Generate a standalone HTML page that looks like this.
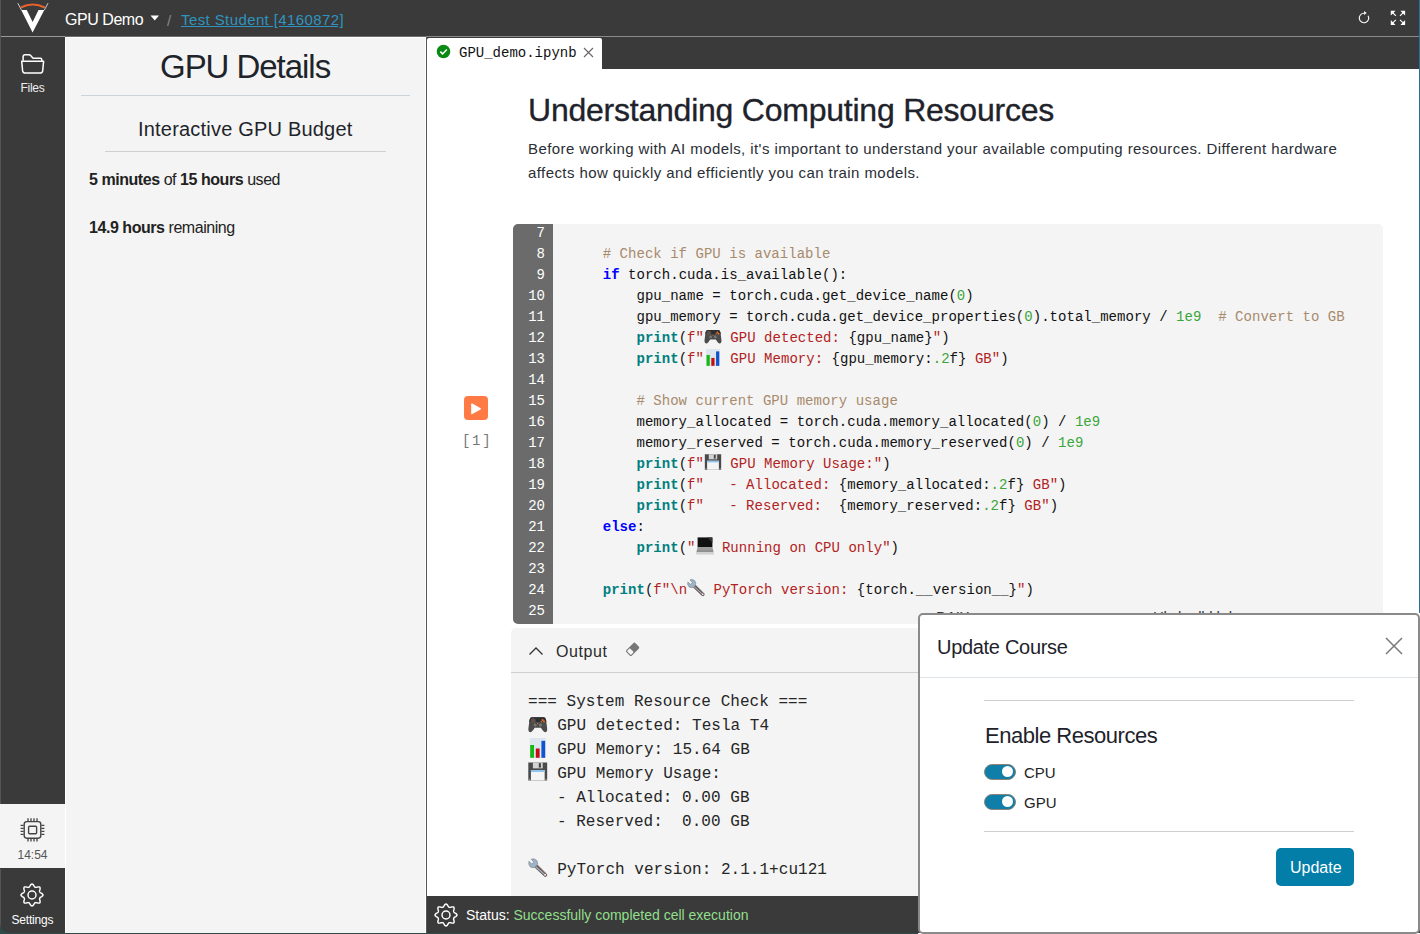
<!DOCTYPE html>
<html><head><meta charset="utf-8">
<style>
*{margin:0;padding:0;box-sizing:border-box}
html,body{width:1420px;height:934px;overflow:hidden;background:#3a3a3a;font-family:"Liberation Sans",sans-serif}
.abs{position:absolute}
.emo{display:inline-block;height:1px;position:relative;vertical-align:baseline}
.emo svg{position:absolute;left:0}
.mono{font-family:"Liberation Mono",monospace}
#top{left:0;top:0;width:1420px;height:36px;background:#3a3a3a}
#topline{left:0;top:36px;width:1420px;height:1px;background:linear-gradient(to right,#999 0,#999 65px,#6e6e6e 65px,#6e6e6e 426px,#8a8a8a 426px)}
#side{left:0;top:37px;width:65px;height:897px;background:#3a3a3a}
#panel{left:65px;top:37px;width:361px;height:897px;background:#f4f4f4;border-left:1px solid #fff;border-right:1px solid #fff;border-top:1px solid #fff}
#divider{left:426px;top:37px;width:1px;height:897px;background:#555}
#nb{left:427px;top:69px;width:993px;height:865px;background:#fff}
#tabbar{left:427px;top:37px;width:993px;height:32px;background:#3a3a3a}
#tab{left:427px;top:38px;width:175px;height:31px;background:#fff;border-top-left-radius:2px;border-top-right-radius:2px}
.t{position:absolute;white-space:pre;line-height:1}
</style></head>
<body>
<svg width="0" height="0" style="position:absolute">
<defs>
<symbol id="s-pad" viewBox="0 0 20 17">
  <path d="M4.2 1.2 Q2.2 1.2 1.6 3.6 L0.4 12.6 Q0.1 16.4 2.6 16.4 Q3.9 16.4 5.3 14.2 L6.8 11.9 H13.2 L14.7 14.2 Q16.1 16.4 17.4 16.4 Q19.9 16.4 19.6 12.6 L18.4 3.6 Q17.8 1.2 15.8 1.2 Z" fill="#4b4b4b"/>
  <path d="M4.2 1.2 Q2.2 1.2 1.6 3.6 L1.3 6 H18.7 L18.4 3.6 Q17.8 1.2 15.8 1.2 Z" fill="#2e2e2e"/>
  <circle cx="5.3" cy="4.8" r="2.4" fill="#555" stroke="#6a4a3a" stroke-width="0.6"/>
  <circle cx="14.9" cy="3.9" r="1.1" fill="#f26a1b"/>
  <circle cx="16.3" cy="5.3" r="1.1" fill="#f26a1b"/>
  <circle cx="13.6" cy="5.5" r="0.9" fill="#777"/>
  <circle cx="7.3" cy="9" r="1.6" fill="#777"/>
  <circle cx="12.7" cy="9" r="1.6" fill="#777"/>
  <circle cx="10" cy="7.5" r="0.8" fill="#d35a1a"/>
</symbol>
<symbol id="s-chart" viewBox="0 0 16 20">
  <rect x="0" y="0" width="16" height="20" fill="#dde6ef"/>
  <rect x="0.4" y="7" width="3.8" height="12.8" fill="#14b814"/>
  <rect x="6" y="10.5" width="3.8" height="9.3" fill="#c40f12"/>
  <rect x="11.6" y="2.8" width="3.8" height="17" fill="#1153cf"/>
</symbol>
<symbol id="s-disk" viewBox="0 0 20 19">
  <path d="M0.3 0.3 H19.7 V18.7 H0.3 Z" fill="#4a4a4a"/>
  <rect x="5" y="0.3" width="10" height="6" fill="#d3d3d3"/>
  <rect x="11" y="1" width="2.2" height="4.5" fill="#444"/>
  <rect x="3" y="8" width="14" height="10.7" fill="#f4f4f4"/>
  <rect x="3" y="8" width="14" height="2" fill="#8fc4ee"/>
  <circle cx="1.6" cy="17.4" r="0.8" fill="#999"/>
  <circle cx="18.4" cy="17.4" r="0.8" fill="#999"/>
</symbol>
<symbol id="s-laptop" viewBox="0 0 18 18">
  <rect x="1.6" y="0.4" width="14.8" height="9.8" fill="#111"/>
  <path d="M11.5 0.4 H16.4 V6 Z" fill="#333"/>
  <path d="M1.6 10.2 H16.4 L17.6 15.2 H0.4 Z" fill="#8e8e8e"/>
  <path d="M2.4 11.4 H15.6 M2.2 12.8 H15.8" stroke="#b5b5b5" stroke-width="0.5"/>
  <rect x="0.2" y="15" width="17.6" height="2.6" fill="#d2d2d2"/>
</symbol>
<symbol id="s-wrench" viewBox="0 0 20 20">
  <path d="M6.9 9.2 L16.6 18.2 Q17.9 19.3 18.9 18.1 Q19.8 16.9 18.5 15.8 L9.3 6.6" fill="#6b5a5a" stroke="#6b5a5a" stroke-width="0.8"/>
  <path d="M7.6 8.3 L17.6 17.2 M8.6 7.3" stroke="#a8bccc" stroke-width="1.1"/>
  <path d="M3.3 0.9 Q6.9 0 8.9 2.3 Q10.5 4.6 9.2 7.1 L7.3 9.1 Q4.5 10.4 2.1 8.6 Q0.2 6.6 0.9 3.2 L3.9 5.9 L6 4.1 Z" fill="#9fb4c6" stroke="#6e7c88" stroke-width="0.6"/>
  <circle cx="17.5" cy="17" r="0.9" fill="#fff"/>
</symbol>
</defs></svg>
<!-- top bar -->
<div id="top" class="abs"></div>
<div id="topline" class="abs"></div>
<svg class="abs" style="left:15px;top:1px" width="36" height="34" viewBox="0 0 36 34">
  <path d="M6.2 9 L11.8 9 L17.6 21 L23.5 9 L29.3 9 L17.6 31.5 Z" fill="#fff"/>
  <path d="M2.8 2.2 L6.5 9.2 M33 2.2 L29.3 9.2" stroke="#ddd" stroke-width="0.9"/>
  <path d="M5.8 6.5 Q17.6 0.5 29.8 6.5" stroke="#e8612c" stroke-width="2" fill="none"/>
</svg>
<div class="t" style="left:65px;top:11.5px;font-size:16px;color:#fff;letter-spacing:-0.45px">GPU Demo</div>
<svg class="abs" style="left:150px;top:15px" width="10" height="6"><path d="M0.5 0.5 L9 0.5 L4.75 5.5 Z" fill="#fff"/></svg>
<div class="t" style="left:167px;top:13px;font-size:15px;color:#888">/</div>
<div class="t" style="left:181px;top:12.3px;font-size:15px;color:#2f94bf;text-decoration:underline;letter-spacing:0.4px">Test Student [4160872]</div>
<svg class="abs" style="left:1356px;top:10px" width="16" height="16" viewBox="0 0 16 16">
  <path d="M8 3.3 A4.7 4.7 0 1 0 12.07 5.65" stroke="#fff" stroke-width="1.1" fill="none"/>
  <path d="M8.1 0.9 L10.6 3 L8.1 5 Z" fill="#fff"/>
</svg>
<svg class="abs" style="left:1390px;top:10px" width="16" height="16" viewBox="0 0 16 16" fill="#fff" stroke="#fff" stroke-width="1.1">
  <path d="M0.8 0.7 H5.5 L0.8 5.6 Z M15.1 0.7 H10.4 L15.1 5.6 Z M0.8 15 H5.5 L0.8 10.1 Z M15.1 15 H10.4 L15.1 10.1 Z" stroke="none"/>
  <path d="M2.5 2.5 L5.9 5.8 M13.4 2.5 L10 5.8 M2.5 13.2 L5.9 9.9 M13.4 13.2 L10 9.9" fill="none"/>
</svg>

<!-- left icon sidebar -->
<div id="side" class="abs"></div>
<svg class="abs" style="left:19px;top:52px" width="28" height="24" viewBox="0 0 28 24" stroke="#fff" stroke-width="1.6" fill="none" stroke-linejoin="round"><g transform="translate(13.6 11.75) scale(0.94) translate(-13.6 -11.75)">
  <path d="M3.5 8.6 V4.4 Q3.5 2.1 5.6 2.1 H9.8 Q10.8 2.1 11.5 2.9 L13.6 5.3 Q14.2 6 15.1 6 H21.9 Q23.4 6 23.4 7.6 V9"/>
  <path d="M2 9.2 H25.3 L24.3 19.4 Q24 21.7 21.6 21.7 H5.7 Q3.3 21.7 3 19.4 Z"/></g>
</svg>
<div class="t" style="left:20.5px;top:81.8px;font-size:12px;color:#eee;letter-spacing:-0.3px">Files</div>

<div class="abs" style="left:0;top:804px;width:65px;height:64px;background:#f4f4f4"></div>
<svg class="abs" style="left:20px;top:818px" width="25" height="25" viewBox="0 0 25 25" stroke="#444" fill="none">
  <rect x="4.2" y="3.6" width="16.6" height="16.6" rx="2.6" stroke-width="1.4"/>
  <rect x="8.6" y="8.2" width="8" height="7.6" rx="1" stroke-width="1.4"/>
  <path d="M8 0.3 V3 M11 0.3 V3 M14 0.3 V3 M17 0.3 V3 M8 20.8 V23.6 M11 20.8 V23.6 M14 20.8 V23.6 M17 20.8 V23.6 M0.6 7.4 H3.6 M0.6 10.4 H3.6 M0.6 13.3 H3.6 M0.6 16.3 H3.6 M21.4 7.4 H24.4 M21.4 10.4 H24.4 M21.4 13.3 H24.4 M21.4 16.3 H24.4" stroke-width="1.3"/>
</svg>
<div class="t" style="left:17.5px;top:848.6px;font-size:12px;color:#555">14:54</div>
<svg class="abs" style="left:19.3px;top:882px" width="26" height="26" viewBox="0 0 26 26" stroke="#fff" stroke-width="1.45" fill="none" stroke-linejoin="round">
  <path d="M13.00 2.00 L13.43 2.09 L13.84 2.35 L14.21 2.75 L14.55 3.22 L14.84 3.73 L15.11 4.20 L15.37 4.59 L15.63 4.89 L15.91 5.10 L16.21 5.24 L16.53 5.35 L16.87 5.41 L17.27 5.38 L17.73 5.28 L18.25 5.14 L18.82 4.99 L19.39 4.89 L19.94 4.88 L20.41 4.98 L20.78 5.22 L21.02 5.59 L21.12 6.06 L21.11 6.61 L21.01 7.18 L20.86 7.75 L20.72 8.27 L20.62 8.73 L20.59 9.13 L20.65 9.47 L20.76 9.79 L20.90 10.09 L21.11 10.37 L21.41 10.63 L21.80 10.89 L22.27 11.16 L22.78 11.45 L23.25 11.79 L23.65 12.16 L23.91 12.57 L24.00 13.00 L23.91 13.43 L23.65 13.84 L23.25 14.21 L22.78 14.55 L22.27 14.84 L21.80 15.11 L21.41 15.37 L21.11 15.63 L20.90 15.91 L20.76 16.21 L20.65 16.53 L20.59 16.87 L20.62 17.27 L20.72 17.73 L20.86 18.25 L21.01 18.82 L21.11 19.39 L21.12 19.94 L21.02 20.41 L20.78 20.78 L20.41 21.02 L19.94 21.12 L19.39 21.11 L18.82 21.01 L18.25 20.86 L17.73 20.72 L17.27 20.62 L16.87 20.59 L16.53 20.65 L16.21 20.76 L15.91 20.90 L15.63 21.11 L15.37 21.41 L15.11 21.80 L14.84 22.27 L14.55 22.78 L14.21 23.25 L13.84 23.65 L13.43 23.91 L13.00 24.00 L12.57 23.91 L12.16 23.65 L11.79 23.25 L11.45 22.78 L11.16 22.27 L10.89 21.80 L10.63 21.41 L10.37 21.11 L10.09 20.90 L9.79 20.76 L9.47 20.65 L9.13 20.59 L8.73 20.62 L8.27 20.72 L7.75 20.86 L7.18 21.01 L6.61 21.11 L6.06 21.12 L5.59 21.02 L5.22 20.78 L4.98 20.41 L4.88 19.94 L4.89 19.39 L4.99 18.82 L5.14 18.25 L5.28 17.73 L5.38 17.27 L5.41 16.87 L5.35 16.53 L5.24 16.21 L5.10 15.91 L4.89 15.63 L4.59 15.37 L4.20 15.11 L3.73 14.84 L3.22 14.55 L2.75 14.21 L2.35 13.84 L2.09 13.43 L2.00 13.00 L2.09 12.57 L2.35 12.16 L2.75 11.79 L3.22 11.45 L3.73 11.16 L4.20 10.89 L4.59 10.63 L4.89 10.37 L5.10 10.09 L5.24 9.79 L5.35 9.47 L5.41 9.13 L5.38 8.73 L5.28 8.27 L5.14 7.75 L4.99 7.18 L4.89 6.61 L4.88 6.06 L4.98 5.59 L5.22 5.22 L5.59 4.98 L6.06 4.88 L6.61 4.89 L7.18 4.99 L7.75 5.14 L8.27 5.28 L8.73 5.38 L9.13 5.41 L9.47 5.35 L9.79 5.24 L10.09 5.10 L10.37 4.89 L10.63 4.59 L10.89 4.20 L11.16 3.73 L11.45 3.22 L11.79 2.75 L12.16 2.35 L12.57 2.09 Z"/>
  <circle cx="13" cy="13" r="4"/>
</svg>
<div class="t" style="left:11.5px;top:913.6px;font-size:12px;color:#fff;letter-spacing:-0.2px">Settings</div>

<!-- GPU panel -->
<div id="panel" class="abs"></div>
<div id="divider" class="abs"></div>
<div class="t" style="left:160px;top:50px;font-size:33px;color:#1f242b;letter-spacing:-1.04px">GPU Details</div>
<div class="abs" style="left:81px;top:95px;width:329px;height:1px;background:#cbd3db"></div>
<div class="t" style="left:138px;top:119px;font-size:20px;color:#1f242b;letter-spacing:0.2px">Interactive GPU Budget</div>
<div class="abs" style="left:105px;top:151px;width:281px;height:1px;background:#cfcfcf"></div>
<div class="t" style="left:89px;top:172.2px;font-size:16px;color:#222;letter-spacing:-0.45px"><b>5 minutes</b> of <b>15 hours</b> used</div>
<div class="t" style="left:89px;top:220.3px;font-size:16px;color:#222;letter-spacing:-0.45px"><b>14.9 hours</b> remaining</div>


<!-- notebook -->
<div id="tabbar" class="abs"></div>
<div id="tab" class="abs"></div>
<svg class="abs" style="left:436px;top:44px" width="15" height="15" viewBox="0 0 15 15">
  <circle cx="7.5" cy="7.5" r="6.8" fill="#0a8a14"/>
  <path d="M4.3 7.6 L6.6 9.9 L10.8 5.4" stroke="#fff" stroke-width="1.5" fill="none"/>
</svg>
<div class="t mono" style="left:459px;top:46.3px;font-size:14px;color:#111">GPU_demo.ipynb</div>
<svg class="abs" style="left:583px;top:47px" width="11" height="11" viewBox="0 0 11 11"><path d="M1 1 L10 10 M10 1 L1 10" stroke="#666" stroke-width="1.1"/></svg>
<div id="nb" class="abs"></div>

<div class="t" style="left:528px;top:93.7px;font-size:32px;color:#1e222a;letter-spacing:-0.23px;-webkit-text-stroke:0.35px #1e222a">Understanding Computing Resources</div>
<div class="t" style="left:528px;top:137.2px;font-size:15px;color:#2a2e35;line-height:24px;letter-spacing:0.42px">Before working with AI models, it's important to understand your available computing resources. Different hardware
affects how quickly and efficiently you can train models.</div>

<!-- run button -->
<div class="abs" style="left:464px;top:396px;width:24px;height:24px;background:#ff7a45;border-radius:4px"></div>
<svg class="abs" style="left:464px;top:396px" width="24" height="24"><path d="M7.2 8.2 Q7.2 7 8.3 7.6 L16.6 12.2 Q17.4 12.8 16.6 13.4 L8.3 18 Q7.2 18.6 7.2 17.4 Z" fill="#fff"/></svg>
<div class="t mono" style="left:462px;top:434px;font-size:14px;color:#777;letter-spacing:1.7px">[1]</div>

<!-- code cell -->
<div class="abs" style="left:513px;top:224px;width:870px;height:400px;background:#f4f4f4;border-radius:5px;overflow:hidden">
  <div class="abs" style="left:0;top:0;width:40px;height:400px;background:#6b6b6b"></div>
</div>
<div id="gutter" class="abs mono" style="left:513px;top:223px;width:32px;font-size:14px;line-height:21px;color:#fff;text-align:right;white-space:pre">7
8
9
10
11
12
13
14
15
16
17
18
19
20
21
22
23
24
25</div>
<div id="code" class="abs mono" style="left:569px;top:223px;font-size:14px;letter-spacing:0.03px;line-height:21px;color:#111;white-space:pre"><div style="height:21px">&nbsp;</div><div style="height:21px">    <span style="color:#a88a6c"># Check if GPU is available</span></div><div style="height:21px">    <b style="color:#0000ff">if</b> torch.cuda.is_available():</div><div style="height:21px">        gpu_name = torch.cuda.get_device_name(<span style="color:#3aa63a">0</span>)</div><div style="height:21px">        gpu_memory = torch.cuda.get_device_properties(<span style="color:#3aa63a">0</span>).total_memory / <span style="color:#3aa63a">1e9</span>  <span style="color:#a88a6c"># Convert to GB</span></div><div style="height:21px">        <b style="color:#007f7f">print</b>(<span style="color:#b22222">f"</span><span class="emo" style="width:18px"><svg width="18" height="15" style="bottom:-2px"><use href="#s-pad"/></svg></span><span style="color:#b22222"> GPU detected: </span>{gpu_name}<span style="color:#b22222">"</span>)</div><div style="height:21px">        <b style="color:#007f7f">print</b>(<span style="color:#b22222">f"</span><span class="emo" style="width:18px"><svg width="18" height="17" style="bottom:-2.5px"><use href="#s-chart"/></svg></span><span style="color:#b22222"> GPU Memory: </span>{gpu_memory:<span style="color:#3aa63a">.2</span>f}<span style="color:#b22222"> GB"</span>)</div><div style="height:21px">&nbsp;</div><div style="height:21px">        <span style="color:#a88a6c"># Show current GPU memory usage</span></div><div style="height:21px">        memory_allocated = torch.cuda.memory_allocated(<span style="color:#3aa63a">0</span>) / <span style="color:#3aa63a">1e9</span></div><div style="height:21px">        memory_reserved = torch.cuda.memory_reserved(<span style="color:#3aa63a">0</span>) / <span style="color:#3aa63a">1e9</span></div><div style="height:21px">        <b style="color:#007f7f">print</b>(<span style="color:#b22222">f"</span><span class="emo" style="width:18px"><svg width="18" height="16" style="bottom:-2px"><use href="#s-disk"/></svg></span><span style="color:#b22222"> GPU Memory Usage:"</span>)</div><div style="height:21px">        <b style="color:#007f7f">print</b>(<span style="color:#b22222">f"   - Allocated: </span>{memory_allocated:<span style="color:#3aa63a">.2</span>f}<span style="color:#b22222"> GB"</span>)</div><div style="height:21px">        <b style="color:#007f7f">print</b>(<span style="color:#b22222">f"   - Reserved:  </span>{memory_reserved:<span style="color:#3aa63a">.2</span>f}<span style="color:#b22222"> GB"</span>)</div><div style="height:21px">    <b style="color:#0000ff">else</b>:</div><div style="height:21px">        <b style="color:#007f7f">print</b>(<span style="color:#b22222">"</span><span class="emo" style="width:18px"><svg width="18" height="18" style="bottom:-3px"><use href="#s-laptop"/></svg></span><span style="color:#b22222"> Running on CPU only"</span>)</div><div style="height:21px">&nbsp;</div><div style="height:21px">    <b style="color:#007f7f">print</b>(<span style="color:#b22222">f"\n</span><span class="emo" style="width:18px"><svg width="18" height="18" style="bottom:-3px"><use href="#s-wrench"/></svg></span><span style="color:#b22222"> PyTorch version: </span>{torch.__version__}<span style="color:#b22222">"</span>)</div><div style="height:21px">&nbsp;</div></div>

<!-- output -->
<div class="abs" style="left:511px;top:628px;width:880px;height:268px;background:#f4f4f4;border-top-left-radius:5px;border-top-right-radius:5px"></div>
<div class="abs" style="left:511px;top:672px;width:880px;height:1px;background:#cfcfcf"></div>
<svg class="abs" style="left:528px;top:644px" width="16" height="12"><path d="M1.5 10.5 L8 4 L14.5 10.5" stroke="#333" stroke-width="1.3" fill="none"/></svg>
<div class="t" style="left:556px;top:643.5px;font-size:16px;color:#2a2a2a;letter-spacing:0.6px">Output</div>
<svg class="abs" style="left:618px;top:636px" width="30" height="26" viewBox="0 0 30 26">
  <g transform="translate(14.6 13.3) rotate(-45)">
    <rect x="-6.4" y="-3.9" width="12.8" height="7.8" rx="1.6" fill="#777"/>
    <rect x="-5.3" y="-2.8" width="4.1" height="5.6" rx="0.8" fill="#f4f4f4"/>
  </g>
</svg>
<div id="out" class="abs mono" style="left:528px;top:690px;font-size:16px;letter-spacing:0.03px;line-height:24px;color:#262626;white-space:pre"><div style="height:24px">=== System Resource Check ===</div><div style="height:24px"><span class="emo" style="width:19.6px"><svg width="19.6" height="17" style="bottom:-2.5px"><use href="#s-pad"/></svg></span> GPU detected: Tesla T4</div><div style="height:24px"><span class="emo" style="width:19.6px"><svg width="19.6" height="20" style="bottom:-3.5px"><use href="#s-chart"/></svg></span> GPU Memory: 15.64 GB</div><div style="height:24px"><span class="emo" style="width:19.6px"><svg width="19.6" height="19" style="bottom:-3px"><use href="#s-disk"/></svg></span> GPU Memory Usage:</div><div style="height:24px">   - Allocated: 0.00 GB</div><div style="height:24px">   - Reserved:  0.00 GB</div><div style="height:24px">&nbsp;</div><div style="height:24px"><span class="emo" style="width:19.6px"><svg width="19.6" height="20" style="bottom:-3.5px"><use href="#s-wrench"/></svg></span> PyTorch version: 2.1.1+cu121</div></div>

<!-- status bar -->
<div class="abs" style="left:427px;top:896px;width:993px;height:37px;background:#3a3a3a"></div>
<svg class="abs" style="left:433px;top:902px" width="26" height="26" viewBox="0 0 26 26" stroke="#fff" stroke-width="1.45" fill="none" stroke-linejoin="round">
  <path d="M13.00 2.00 L13.43 2.09 L13.84 2.35 L14.21 2.75 L14.55 3.22 L14.84 3.73 L15.11 4.20 L15.37 4.59 L15.63 4.89 L15.91 5.10 L16.21 5.24 L16.53 5.35 L16.87 5.41 L17.27 5.38 L17.73 5.28 L18.25 5.14 L18.82 4.99 L19.39 4.89 L19.94 4.88 L20.41 4.98 L20.78 5.22 L21.02 5.59 L21.12 6.06 L21.11 6.61 L21.01 7.18 L20.86 7.75 L20.72 8.27 L20.62 8.73 L20.59 9.13 L20.65 9.47 L20.76 9.79 L20.90 10.09 L21.11 10.37 L21.41 10.63 L21.80 10.89 L22.27 11.16 L22.78 11.45 L23.25 11.79 L23.65 12.16 L23.91 12.57 L24.00 13.00 L23.91 13.43 L23.65 13.84 L23.25 14.21 L22.78 14.55 L22.27 14.84 L21.80 15.11 L21.41 15.37 L21.11 15.63 L20.90 15.91 L20.76 16.21 L20.65 16.53 L20.59 16.87 L20.62 17.27 L20.72 17.73 L20.86 18.25 L21.01 18.82 L21.11 19.39 L21.12 19.94 L21.02 20.41 L20.78 20.78 L20.41 21.02 L19.94 21.12 L19.39 21.11 L18.82 21.01 L18.25 20.86 L17.73 20.72 L17.27 20.62 L16.87 20.59 L16.53 20.65 L16.21 20.76 L15.91 20.90 L15.63 21.11 L15.37 21.41 L15.11 21.80 L14.84 22.27 L14.55 22.78 L14.21 23.25 L13.84 23.65 L13.43 23.91 L13.00 24.00 L12.57 23.91 L12.16 23.65 L11.79 23.25 L11.45 22.78 L11.16 22.27 L10.89 21.80 L10.63 21.41 L10.37 21.11 L10.09 20.90 L9.79 20.76 L9.47 20.65 L9.13 20.59 L8.73 20.62 L8.27 20.72 L7.75 20.86 L7.18 21.01 L6.61 21.11 L6.06 21.12 L5.59 21.02 L5.22 20.78 L4.98 20.41 L4.88 19.94 L4.89 19.39 L4.99 18.82 L5.14 18.25 L5.28 17.73 L5.38 17.27 L5.41 16.87 L5.35 16.53 L5.24 16.21 L5.10 15.91 L4.89 15.63 L4.59 15.37 L4.20 15.11 L3.73 14.84 L3.22 14.55 L2.75 14.21 L2.35 13.84 L2.09 13.43 L2.00 13.00 L2.09 12.57 L2.35 12.16 L2.75 11.79 L3.22 11.45 L3.73 11.16 L4.20 10.89 L4.59 10.63 L4.89 10.37 L5.10 10.09 L5.24 9.79 L5.35 9.47 L5.41 9.13 L5.38 8.73 L5.28 8.27 L5.14 7.75 L4.99 7.18 L4.89 6.61 L4.88 6.06 L4.98 5.59 L5.22 5.22 L5.59 4.98 L6.06 4.88 L6.61 4.89 L7.18 4.99 L7.75 5.14 L8.27 5.28 L8.73 5.38 L9.13 5.41 L9.47 5.35 L9.79 5.24 L10.09 5.10 L10.37 4.89 L10.63 4.59 L10.89 4.20 L11.16 3.73 L11.45 3.22 L11.79 2.75 L12.16 2.35 L12.57 2.09 Z"/>
  <circle cx="13" cy="13" r="4"/>
</svg>
<div class="t" style="left:466px;top:908px;font-size:14px;color:#fff">Status: <span style="color:#92df8d">Successfully completed cell execution</span></div>

<div class="abs" style="left:934px;top:610px;width:40px;height:3px;overflow:hidden"><div class="t" style="left:2px;top:-1px;font-size:15px;color:#333;letter-spacing:-0.5px">DAIX</div></div>
<div class="abs" style="left:1150px;top:610px;width:100px;height:3px;overflow:hidden"><div class="t" style="left:3px;top:-1px;font-size:15px;color:#333;letter-spacing:-0.3px">Hkshcdhkkd</div></div>
<!-- modal -->
<div class="abs" style="left:918px;top:613px;width:502px;height:321px;background:#fff;border:2px solid #8a8a8a;border-radius:5px"></div>
<div class="t" style="left:937px;top:637px;font-size:20px;color:#1e222a;letter-spacing:-0.3px">Update Course</div>
<svg class="abs" style="left:1385px;top:637px" width="18" height="18"><path d="M1 1 L17 17 M17 1 L1 17" stroke="#777" stroke-width="1.5"/></svg>
<div class="abs" style="left:920px;top:677px;width:498px;height:1px;background:#dfe4ea"></div>
<div class="abs" style="left:984px;top:700px;width:370px;height:1px;background:#cfcfcf"></div>
<div class="t" style="left:985px;top:724.5px;font-size:22px;color:#1e222a;letter-spacing:-0.47px">Enable Resources</div>
<div class="abs" style="left:984px;top:764px;width:32px;height:16px;background:#0f7fa9;border:1px solid #8c8478;border-radius:8px"></div>
<div class="abs" style="left:1002.4px;top:766.4px;width:11px;height:11px;background:#fff;border-radius:50%"></div>
<div class="t" style="left:1024px;top:765px;font-size:15px;color:#222">CPU</div>
<div class="abs" style="left:984px;top:794px;width:32px;height:16px;background:#0f7fa9;border:1px solid #8c8478;border-radius:8px"></div>
<div class="abs" style="left:1002.4px;top:796.4px;width:11px;height:11px;background:#fff;border-radius:50%"></div>
<div class="t" style="left:1024px;top:795px;font-size:15px;color:#222">GPU</div>
<div class="abs" style="left:984px;top:831px;width:370px;height:1px;background:#cfcfcf"></div>
<div class="abs" style="left:1276px;top:848px;width:78px;height:38px;background:#027ea8;border-radius:5px"></div>
<div class="t" style="left:1290px;top:859.5px;font-size:16px;color:#fff">Update</div>
<!-- window edges -->
<div class="abs" style="left:1419px;top:0;width:1px;height:613px;background:#2c6f9a"></div>

<div class="abs" style="left:0;top:0;width:1px;height:804px;background:#555"></div>
<div class="abs" style="left:0;top:869px;width:1px;height:65px;background:#555"></div>
<div class="abs" style="left:0;top:933px;width:918px;height:1px;background:#2f4a48"></div>
<svg class="abs" style="left:0;top:922px" width="12" height="12"><path d="M0 0 Q0 11 11 11 V12 H0 Z" fill="#2d4b4a"/></svg>
</body></html>
